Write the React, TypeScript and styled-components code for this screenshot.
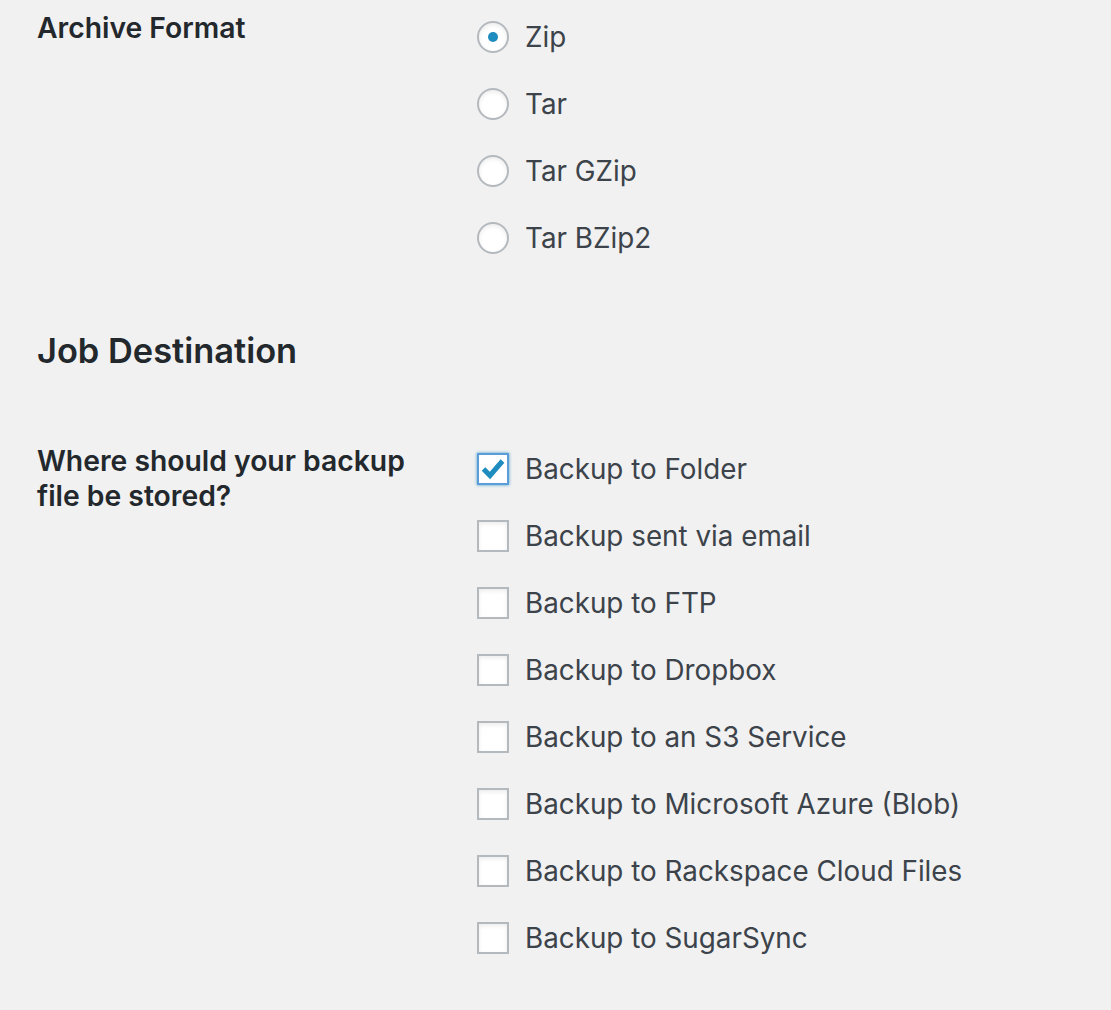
import styled, { createGlobalStyle } from 'styled-components'

const GlobalStyle = createGlobalStyle`
  html, body { margin: 0; padding: 0; background: #f1f1f1; }
  body { font-family: Inter, "Liberation Sans", sans-serif; -webkit-font-smoothing: antialiased; }
`

const Page = styled.div`
  padding: 3px 0 0 37px;
  width: 1074px;
`

const FieldRow = styled.div`
  display: grid;
  grid-template-columns: 440px 1fr;
`

const FieldLabel = styled.div<{ $top: number }>`
  margin-top: ${({ $top }) => $top}px;
  font-size: 28.3px;
  line-height: 35px;
  font-weight: 600;
  color: #23282d;
`

const OptionList = styled.div`
  display: flex;
  flex-direction: column;
`

const Option = styled.label`
  height: 67px;
  display: flex;
  align-items: center;
  gap: 16px;
  font-size: 27.8px;
  color: #3c434a;
`

const RadioMark = styled.span<{ $checked?: boolean }>`
  box-sizing: border-box;
  flex: none;
  width: 32px;
  height: 32px;
  border-radius: 50%;
  border: 2px solid #b4b9be;
  background: #fff;
  box-shadow: inset 0 2px 4px rgba(0, 0, 0, 0.08);
  display: flex;
  align-items: center;
  justify-content: center;
  &::after {
    content: '';
    display: ${({ $checked }) => ($checked ? 'block' : 'none')};
    width: 10px;
    height: 10px;
    border-radius: 50%;
    background: #1e8cbe;
  }
`

const CheckMark = styled.span<{ $checked?: boolean }>`
  box-sizing: border-box;
  flex: none;
  width: 32px;
  height: 32px;
  border: 2px solid ${({ $checked }) => ($checked ? '#5b9dd9' : '#b4b9be')};
  background: #fff;
  box-shadow: ${({ $checked }) =>
    $checked ? '0 0 3px rgba(30, 140, 190, 0.8)' : 'inset 0 2px 4px rgba(0, 0, 0, 0.08)'};
  display: flex;
  align-items: center;
  justify-content: center;
  svg { display: block; }
`

const SectionHeading = styled.h2`
  margin: 60px 0 64px;
  font-size: 34.4px;
  line-height: 40px;
  font-weight: 600;
  color: #23282d;
`

const formats = ['Zip', 'Tar', 'Tar GZip', 'Tar BZip2']

const destinations = [
  'Backup to Folder',
  'Backup sent via email',
  'Backup to FTP',
  'Backup to Dropbox',
  'Backup to an S3 Service',
  'Backup to Microsoft Azure (Blob)',
  'Backup to Rackspace Cloud Files',
  'Backup to SugarSync',
]

const Tick = () => (
  <svg width="24" height="24" viewBox="0 0 24 24">
    <path d="M2.5 12 L9 18.5 L21.5 4" fill="none" stroke="#1e8cbe" strokeWidth="5" strokeLinejoin="miter" />
  </svg>
)

export default function App() {
  return (
    <>
      <GlobalStyle />
      <Page>
        <FieldRow>
          <FieldLabel $top={8}>Archive Format</FieldLabel>
          <OptionList>
            {formats.map((f, i) => (
              <Option key={f}>
                <RadioMark $checked={i === 0} />
                {f}
              </Option>
            ))}
          </OptionList>
        </FieldRow>

        <SectionHeading>Job Destination</SectionHeading>

        <FieldRow>
          <FieldLabel $top={9}>
            Where should your backup
            <br />
            file be stored?
          </FieldLabel>
          <OptionList>
            {destinations.map((d, i) => (
              <Option key={d}>
                <CheckMark $checked={i === 0}>{i === 0 && <Tick />}</CheckMark>
                {d}
              </Option>
            ))}
          </OptionList>
        </FieldRow>
      </Page>
    </>
  )
}
